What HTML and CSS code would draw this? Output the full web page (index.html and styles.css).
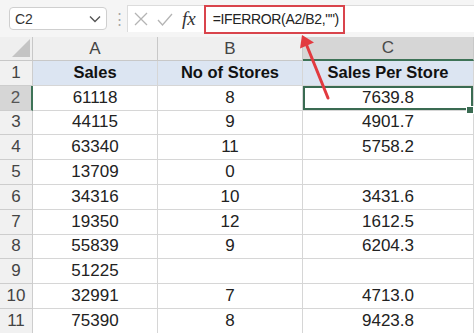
FILE: index.html
```html
<!DOCTYPE html>
<html lang="en">
<head>
  <meta charset="UTF-8">
  <meta name="viewport" content="width=device-width, initial-scale=1.0">
  <title>Sales Per Store</title>
  <link rel="stylesheet" href="styles.css">
</head>
<body>
  <div id="app">
    <div class="toolbar">
      <div class="namebox">
        <span>C2</span>
        <svg class="chevron" width="12" height="8" viewBox="0 0 12 8"><path d="M1 1.5 L6 6.5 L11 1.5" fill="none" stroke="#555" stroke-width="1.4"/></svg>
      </div>
      <span class="grip">&#8942;</span>
      <div class="formula">
        <svg class="icon-x" width="14" height="14" viewBox="0 0 14 14"><path d="M1 1 L13 13 M13 1 L1 13" stroke="#b4b4b4" stroke-width="1.3" fill="none"/></svg>
        <svg class="icon-check" width="16" height="13" viewBox="0 0 16 13"><path d="M1 7 L5.5 12 L15 1" stroke="#b4b4b4" stroke-width="1.3" fill="none"/></svg>
        <span class="fx">fx</span>
        <span class="expr">=IFERROR(A2/B2,"")</span>
      </div>
    </div>

    <div class="sheet">
      <div class="corner"><div class="tri"></div></div>
      <div class="colhead">A</div>
      <div class="colhead">B</div>
      <div class="colhead colhead-sel">C</div>

      <div class="rowhead">1</div>
      <div class="cell title">Sales</div>
      <div class="cell title">No of Stores</div>
      <div class="cell title">Sales Per Store</div>

      <div class="rowhead rowhead-sel">2</div>
      <div class="cell">61118</div>
      <div class="cell">8</div>
      <div class="cell cell-sel">7639.8</div>

      <div class="rowhead">3</div>
      <div class="cell">44115</div>
      <div class="cell">9</div>
      <div class="cell">4901.7</div>

      <div class="rowhead">4</div>
      <div class="cell">63340</div>
      <div class="cell">11</div>
      <div class="cell">5758.2</div>

      <div class="rowhead">5</div>
      <div class="cell">13709</div>
      <div class="cell">0</div>
      <div class="cell"></div>

      <div class="rowhead">6</div>
      <div class="cell">34316</div>
      <div class="cell">10</div>
      <div class="cell">3431.6</div>

      <div class="rowhead">7</div>
      <div class="cell">19350</div>
      <div class="cell">12</div>
      <div class="cell">1612.5</div>

      <div class="rowhead">8</div>
      <div class="cell">55839</div>
      <div class="cell">9</div>
      <div class="cell">6204.3</div>

      <div class="rowhead">9</div>
      <div class="cell">51225</div>
      <div class="cell"></div>
      <div class="cell"></div>

      <div class="rowhead">10</div>
      <div class="cell">32991</div>
      <div class="cell">7</div>
      <div class="cell">4713.0</div>

      <div class="rowhead">11</div>
      <div class="cell">75390</div>
      <div class="cell">8</div>
      <div class="cell">9423.8</div>
    </div>

    <!-- annotation arrow pointing at the formula -->
    <svg class="arrow" width="474" height="333" viewBox="0 0 474 333">
      <line x1="328" y1="98" x2="307" y2="46" stroke="#e23a40" stroke-width="3" stroke-linecap="round"/>
      <polygon points="302,35 314,42.5 300,48.5" fill="#e23a40"/>
    </svg>
  </div>
</body>
</html>
```

FILE: styles.css
```css
* {
  box-sizing: border-box;
}

body {
  margin: 0;
  background: #fff;
  font-family: "Liberation Sans", Arial, sans-serif;
  color: #222;
}

#app {
  position: relative;
  width: 474px;
  height: 333px;
  overflow: hidden;
}

/* formula bar */
.toolbar {
  display: flex;
  align-items: center;
  height: 37px;
  padding-left: 9px;
  background: #f5f5f5;
}

.namebox {
  display: flex;
  align-items: center;
  justify-content: space-between;
  width: 98px;
  height: 23px;
  padding: 0 5px 0 5px;
  background: #fff;
  border: 1px solid #cfcfcf;
  border-radius: 4px;
  font-size: 14px;
  color: #333;
}

.grip {
  width: 10px;
  margin: 0 1px 0 5px;
  text-align: center;
  color: #a8a8a8;
  font-size: 15px;
}

.formula {
  flex: 1;
  display: flex;
  align-items: center;
  height: 27px;
  margin-left: 4px;
  background: #fff;
  border-top: 1px solid #dcdcdc;
  border-left: 1px solid #dcdcdc;
}

.icon-x {
  margin-left: 6px;
}

.icon-check {
  margin-left: 9px;
}

.fx {
  margin-left: 9px;
  font-family: "Liberation Serif", serif;
  font-style: italic;
  font-size: 19px;
  color: #333;
}

.expr {
  display: flex;
  align-items: center;
  width: 141px;
  height: 29px;
  margin-left: 8px;
  padding-left: 7px;
  border: 2.5px solid #d9444c;
  font-size: 14px;
  letter-spacing: -0.35px;
  white-space: nowrap;
  color: #222;
  background: #fff;
}

/* grid */
.sheet {
  display: grid;
  grid-template-columns: 33px 125px 145px 171px;
  grid-template-rows: 24px repeat(11, 24.8px);
}

.sheet > div {
  display: flex;
  align-items: center;
  justify-content: center;
  border-right: 1px solid #d6d6d6;
  border-bottom: 1px solid #d6d6d6;
}

.corner {
  background: #efefef;
}

.sheet > .corner {
  align-items: flex-end;
  justify-content: flex-end;
  padding: 0 2px 3px 0;
  border-color: #c8c8c8;
}

.tri {
  width: 18px;
  height: 18px;
  background: #c4c4c4;
  clip-path: polygon(100% 0, 100% 100%, 0 100%);
}

.colhead {
  background: #efefef;
  font-size: 17px;
  color: #444;
}

.sheet > .colhead {
  border-color: #c8c8c8;
}

.sheet > .colhead-sel {
  background: #d6d6d6;
  color: #4a4a4a;
  border-bottom: 2px solid #3e7357;
}

.rowhead {
  background: #f1f1f1;
  font-size: 17px;
  color: #444;
}

.sheet > .rowhead {
  border-color: #cdcdcd;
}

.sheet > .rowhead-sel {
  background: #d6d6d6;
  color: #555;
  border-right: 2px solid #3e7357;
}

.cell {
  font-size: 17px;
  color: #222;
}

.title {
  background: #dce5f2;
  font-weight: bold;
  font-size: 16.5px;
  color: #111;
}

.cell-sel {
  position: relative;
  box-shadow: inset 0 0 0 2px #3a6b52;
}

.cell-sel::after {
  content: "";
  position: absolute;
  right: -1px;
  bottom: -4px;
  width: 6px;
  height: 6px;
  background: #3a6b52;
  border: 1px solid #fff;
}

.arrow {
  position: absolute;
  top: 0;
  left: 0;
  pointer-events: none;
}
```
